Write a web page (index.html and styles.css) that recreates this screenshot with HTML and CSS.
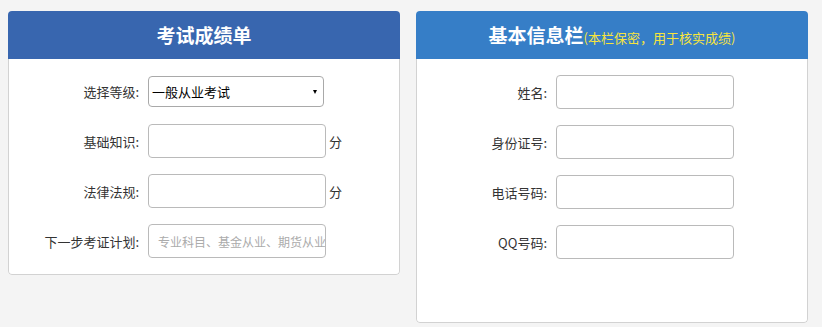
FILE: index.html
```html
<!DOCTYPE html>
<html lang="zh">
<head>
	<meta charset="UTF-8" />
	<meta name="viewport" content="width=device-width, initial-scale=1.0" />
	<title>考试成绩单</title>
	<link rel="stylesheet" href="styles.css">
</head>
<body>
	<div class="wrap">
		<!--成绩单-->
		<div class="panel">
			<div class="panel_hd hd_score">考试成绩单</div>
			<div class="panel_bd">
				<div class="row">
					<label class="lab">选择等级:</label>
					<div class="sel_box">
						<select class="sel">
							<option>一般从业考试</option>
							<option>专项考试</option>
						</select>
					</div>
				</div>
				<div class="row">
					<label class="lab">基础知识:</label>
					<input type="text" class="ipt" />
					<span class="unit">分</span>
				</div>
				<div class="row">
					<label class="lab">法律法规:</label>
					<input type="text" class="ipt" />
					<span class="unit">分</span>
				</div>
				<div class="row">
					<label class="lab">下一步考证计划:</label>
					<input type="text" class="ipt" placeholder="专业科目、基金从业、期货从业" />
				</div>
			</div>
		</div>
		<!--基本信息-->
		<div class="panel">
			<div class="panel_hd hd_info">基本信息栏<span class="tip">(本栏保密，用于核实成绩)</span></div>
			<div class="panel_bd bd_info">
				<div class="row">
					<label class="lab">姓名:</label>
					<input type="text" class="ipt" />
				</div>
				<div class="row">
					<label class="lab">身份证号:</label>
					<input type="text" class="ipt" />
				</div>
				<div class="row">
					<label class="lab">电话号码:</label>
					<input type="text" class="ipt" />
				</div>
				<div class="row">
					<label class="lab">QQ号码:</label>
					<input type="text" class="ipt" />
				</div>
			</div>
		</div>
	</div>
</body>
</html>
```

FILE: styles.css
```css
*{ margin: 0; padding: 0; box-sizing: border-box;}
body{
	background: #F4F4F4;
	font-family: "Microsoft YaHei", "Noto Sans CJK SC", "Liberation Sans", sans-serif;
	font-size: 13px;
	color: #333;
}
.wrap{
	display: flex;
	align-items: flex-start;
	gap: 16px;
	padding: 11px 0 0 8px;
}
.panel{
	width: 392px;
	border-radius: 4px;
	overflow: hidden;
	background: #fff;
}
.panel_hd{
	height: 48px;
	line-height: 48px;
	text-align: center;
	color: #fff;
	font-size: 19px;
	font-weight: bold;
}
.hd_score{ background: #3866AF;}
.hd_info{ background: #367EC7;}
.tip{
	font-size: 13px;
	font-weight: normal;
	color: #F7E43C;
}
.panel_bd{
	border: 1px solid #D2D2D2;
	border-top: 0;
	border-radius: 0 0 4px 4px;
	padding: 15px 0 16px;
	display: flex;
	flex-direction: column;
	gap: 16px;
}
.bd_info{
	height: 264px;
	padding-top: 16px;
}
.row{
	display: flex;
	align-items: center;
	height: 34px;
}
.lab{
	width: 130px;
	margin-right: 9px;
	text-align: right;
	white-space: nowrap;
}
.ipt{
	width: 178px;
	height: 34px;
	padding: 0 0 0 9px;
	border: 1px solid #BABABA;
	border-radius: 4px;
	font-family: inherit;
	font-size: 12px;
	color: #333;
	outline: none;
}
.ipt::placeholder{ color: #ABABAB;}
.unit{
	margin-left: 3px;
}
.sel_box{
	position: relative;
	width: 176px;
	height: 31px;
}
.sel_box:after{
	content: "";
	position: absolute;
	right: 7px;
	top: 14px;
	border-left: 2.5px solid transparent;
	border-right: 2.5px solid transparent;
	border-top: 4px solid #000;
}
.sel{
	-webkit-appearance: none;
	appearance: none;
	width: 100%;
	height: 100%;
	padding: 0 3px;
	border: 1px solid #A9A9A9;
	border-radius: 4px;
	background: #fff;
	font-family: inherit;
	font-size: 13px;
	color: #000;
	outline: none;
}
```
